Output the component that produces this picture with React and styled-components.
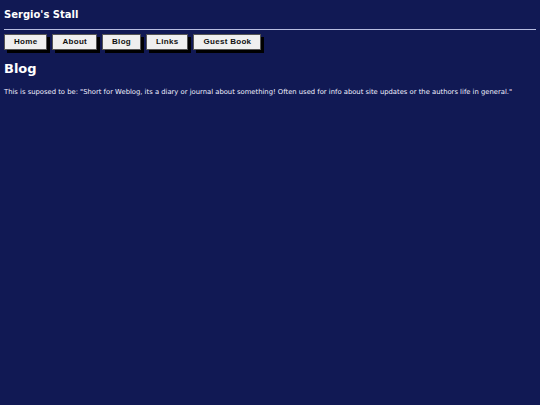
import React from "react";
import styled, { createGlobalStyle } from "styled-components";

const GlobalStyle = createGlobalStyle`
  html, body {
    margin: 0;
    background: #111954;
  }
  body {
    padding: 4px;
    color: #f0f0ff;
    font-family: "DejaVu Sans", Verdana, sans-serif;
  }
`;

const Title = styled.h1`
  margin: 4px 0 0;
  font-size: 10px;
  font-weight: bold;
  line-height: 14px;
  color: #ffffff;
`;

const Rule = styled.hr`
  margin: 7px 0 4px;
  border: 0;
  height: 1px;
  background: #b8bde0;
`;

const Nav = styled.nav`
  display: flex;
  gap: 5px;
`;

const NavButton = styled.a`
  display: block;
  box-sizing: border-box;
  height: 16px;
  padding: 0 9px;
  background: #efefef;
  border: 1px solid #555;
  box-shadow: 3px 3px 0 #000;
  color: #111;
  font-family: "Liberation Sans", Arial, sans-serif;
  font-size: 8px;
  font-weight: bold;
  letter-spacing: 0.3px;
  line-height: 14px;
  text-decoration: none;
  text-align: center;
`;

const Heading = styled.h2`
  margin: 10px 0 0;
  font-size: 13px;
  line-height: 18px;
  color: #ffffff;
`;

const Text = styled.p`
  margin: 9px 0 0;
  font-size: 6.8px;
  line-height: 10px;
`;

const links = ["Home", "About", "Blog", "Links", "Guest Book"];

export default function App() {
  return (
    <>
      <GlobalStyle />
      <Title>Sergio's Stall</Title>
      <Rule />
      <Nav>
        {links.map((l) => (
          <NavButton key={l} href="#">
            {l}
          </NavButton>
        ))}
      </Nav>
      <Heading>Blog</Heading>
      <Text>
        This is suposed to be: "Short for Weblog, its a diary or journal about
        something! Often used for info about site updates or the authors life in
        general."
      </Text>
    </>
  );
}
